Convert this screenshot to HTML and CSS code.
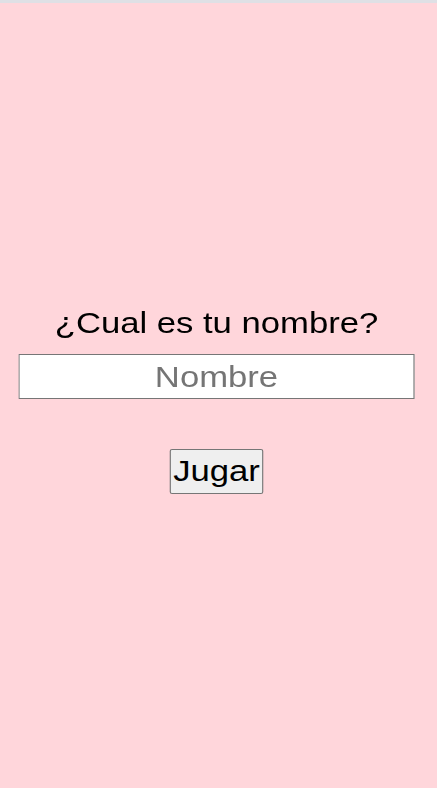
FILE: index.html
```html
<!DOCTYPE html>
<html lang="es">
<head>
<meta charset="utf-8">
<title>Juego</title>
<link rel="stylesheet" href="styles.css">
</head>
<body>
<div class="topbar"></div>
<main class="screen">
  <form class="form">
    <label class="question" for="name">¿Cual es tu nombre?</label>
    <input class="name-input" id="name" type="text" placeholder="Nombre">
    <button class="play" type="button">Jugar</button>
  </form>
</main>
</body>
</html>
```
FILE: styles.css
```css
html, body {
  margin: 0;
  padding: 0;
  height: 100%;
}
body {
  background: #ffd6db;
  font-family: "Liberation Sans", Arial, sans-serif;
  display: flex;
  flex-direction: column;
}
.topbar {
  height: 3px;
  background: #dfe0e5;
  flex: none;
}
.screen {
  flex: 1;
  display: flex;
  justify-content: center;
  align-items: flex-start;
  padding: 303px 5px 0 0;
}
.form {
  display: flex;
  flex-direction: column;
  align-items: center;
  transform: scaleX(1.155);
  transform-origin: center top;
}
.question {
  font-size: 30px;
  color: #000;
  line-height: 34px;
  margin-bottom: 14px;
}
.name-input {
  box-sizing: border-box;
  width: 343px;
  height: 45px;
  font-size: 30px;
  font-family: "Liberation Sans", Arial, sans-serif;
  text-align: center;
  border: 1px solid #767676;
  background: #fff;
  padding: 0 2px 0;
  margin: 0;
  border-radius: 0;
}
.name-input::placeholder {
  color: #757575;
}
.play {
  margin-top: 50px;
  box-sizing: border-box;
  height: 45px;
  font-size: 30px;
  font-family: "Liberation Sans", Arial, sans-serif;
  padding: 0 2px 2px;
  background: #efefef;
  border: 1px solid #767676;
  border-radius: 2px;
  color: #000;
}
```
